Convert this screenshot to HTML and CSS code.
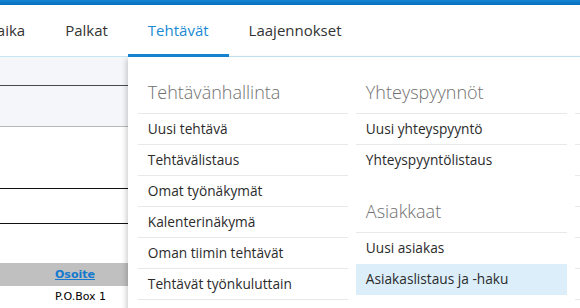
FILE: index.html
```html
<!doctype html>
<html>
<head>
<meta charset="utf-8">
<link rel="stylesheet" href="styles.css">
</head>
<body>

<div class="topbar"></div>

<nav class="mainnav">
	<ul>
		<li class="tab"><a href="#">Työaika</a></li>
		<li class="tab"><a href="#">Palkat</a></li>
		<li class="tab active">
			<a href="#">Tehtävät</a>
			<div class="dropdown">
				<div class="col">
					<h3>Tehtävänhallinta</h3>
					<a class="item" href="#">Uusi tehtävä</a>
					<a class="item" href="#">Tehtävälistaus</a>
					<a class="item" href="#">Omat työnäkymät</a>
					<a class="item" href="#">Kalenterinäkymä</a>
					<a class="item" href="#">Oman tiimin tehtävät</a>
					<a class="item" href="#">Tehtävät työnkuluttain</a>
				</div>
				<div class="col">
					<h3>Yhteyspyynnöt</h3>
					<a class="item" href="#">Uusi yhteyspyyntö</a>
					<a class="item last" href="#">Yhteyspyyntölistaus</a>
					<h3>Asiakkaat</h3>
					<a class="item last" href="#">Uusi asiakas</a>
					<a class="item hover" href="#">Asiakaslistaus ja -haku</a>
				</div>
				<div class="col">
					<h3 class="blank"></h3>
					<a class="item" href="#"></a>
					<a class="item" href="#"></a>
					<a class="item" href="#"></a>
					<a class="item" href="#"></a>
					<a class="item" href="#"></a>
					<a class="item" href="#"></a>
				</div>
			</div>
		</li>
		<li class="tab"><a href="#">Laajennokset</a></li>
	</ul>
</nav>

<div class="page">
	<div class="toolbar">
		<div class="toolbar-top"></div>
		<div class="toolbar-bottom"></div>
	</div>
	<div class="filter"></div>
	<div class="summary"></div>
	<div class="spacer"></div>
	<div class="grid-head"><a href="#">Osoite</a></div>
	<div class="grid-row">P.O.Box 1</div>
</div>

</body>
</html>
```

FILE: styles.css
```css
html, body {
	margin: 0;
	overflow: hidden;
	background: #fff;
}
body {
	font-family: "Open Sans", "Liberation Sans", sans-serif;
	color: #333;
}
a {
	text-decoration: none;
	color: inherit;
}

.topbar {
	height: 5px;
	background: linear-gradient(#1585d3, #0570bd);
}

.mainnav {
	position: relative;
	z-index: 2;
	height: 51px;
	border-bottom: 1px solid #c6e6f4;
	background: #fff;
}
.mainnav ul {
	display: flex;
	margin: 0 0 0 -48px;
	padding: 0;
	list-style: none;
}
.tab {
	position: relative;
	height: 52px;
	margin-bottom: -1px;
}
.tab > a {
	display: block;
	padding: 0 20px;
	line-height: 51px;
	font-size: 15px;
	color: #333;
}
.tab.active > a {
	color: #1a8ad4;
	box-shadow: inset 0 -3px 0 #1585d3;
	height: 52px;
}

.dropdown {
	position: absolute;
	left: 0;
	top: 52px;
	width: 640px;
	height: 300px;
	padding-left: 10px;
	background: #fff;
	box-shadow: -2px 2px 5px rgba(0, 0, 0, 0.18);
	display: grid;
	grid-template-columns: 210px 211px 210px;
	column-gap: 8px;
	align-items: start;
}
.col {
	display: flex;
	flex-direction: column;
}
.col h3 {
	margin: 0;
	padding: 23px 10px 9px;
	line-height: 24px;
	font-size: 18px;
	font-weight: 300;
	color: #707070;
	border-bottom: 1px solid #e8e8e8;
}
.col h3.blank {
	height: 24px;
}
.item {
	display: block;
	padding: 0 10px;
	height: 30px;
	line-height: 30px;
	font-size: 13.7px;
	color: #2b2b2b;
	border-bottom: 1px solid #e8e8e8;
	white-space: nowrap;
}
.item.last {
	border-bottom-color: transparent;
}
.item.hover {
	background: #dbeefa;
	border-bottom-color: #dbeefa;
}

.page {
	width: 128px;
	font-family: "DejaVu Sans", Verdana, sans-serif;
	font-size: 11px;
	color: #000;
}
.toolbar {
	background: #f4f6f9;
	border-bottom: 1px solid #b8b8b8;
}
.toolbar-top {
	height: 28px;
	border-bottom: 1px solid #4a4a4a;
}
.toolbar-bottom {
	height: 40px;
}
.filter {
	height: 61px;
	border-bottom: 1px solid #111;
}
.summary {
	height: 34px;
	border-bottom: 1px solid #111;
}
.spacer {
	height: 39px;
}
.grid-head {
	height: 23px;
	line-height: 23px;
	padding-left: 55px;
	background: #c0c0c0;
}
.grid-head a {
	color: #1479cf;
	font-weight: bold;
	text-decoration: underline;
}
.grid-row {
	padding-left: 55px;
	line-height: 22px;
}
```
